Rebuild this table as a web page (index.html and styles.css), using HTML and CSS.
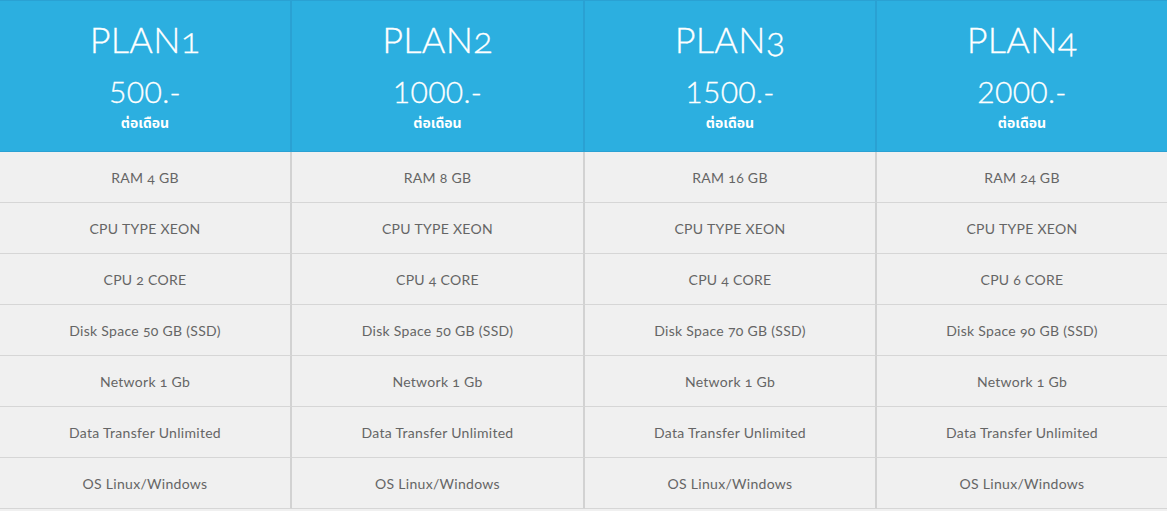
FILE: index.html
```html
<!DOCTYPE html>
<html lang="th">
<head>
<meta charset="utf-8">
<title>Plans</title>
<link rel="stylesheet" href="styles.css">
</head>
<body>
<div class="plans">
  <div class="plan">
    <div class="plan-head">
      <div class="plan-name">PLAN1</div>
      <div class="plan-price">500.-</div>
      <div class="plan-period">ต่อเดือน</div>
    </div>
    <div class="feat">RAM 4 GB</div>
    <div class="feat">CPU TYPE XEON</div>
    <div class="feat">CPU 2 CORE</div>
    <div class="feat">Disk Space 50 GB (SSD)</div>
    <div class="feat">Network 1 Gb</div>
    <div class="feat">Data Transfer Unlimited</div>
    <div class="feat">OS Linux/Windows</div>
  </div>
  <div class="plan">
    <div class="plan-head">
      <div class="plan-name">PLAN2</div>
      <div class="plan-price">1000.-</div>
      <div class="plan-period">ต่อเดือน</div>
    </div>
    <div class="feat">RAM 8 GB</div>
    <div class="feat">CPU TYPE XEON</div>
    <div class="feat">CPU 4 CORE</div>
    <div class="feat">Disk Space 50 GB (SSD)</div>
    <div class="feat">Network 1 Gb</div>
    <div class="feat">Data Transfer Unlimited</div>
    <div class="feat">OS Linux/Windows</div>
  </div>
  <div class="plan">
    <div class="plan-head">
      <div class="plan-name">PLAN3</div>
      <div class="plan-price">1500.-</div>
      <div class="plan-period">ต่อเดือน</div>
    </div>
    <div class="feat">RAM 16 GB</div>
    <div class="feat">CPU TYPE XEON</div>
    <div class="feat">CPU 4 CORE</div>
    <div class="feat">Disk Space 70 GB (SSD)</div>
    <div class="feat">Network 1 Gb</div>
    <div class="feat">Data Transfer Unlimited</div>
    <div class="feat">OS Linux/Windows</div>
  </div>
  <div class="plan">
    <div class="plan-head">
      <div class="plan-name">PLAN4</div>
      <div class="plan-price">2000.-</div>
      <div class="plan-period">ต่อเดือน</div>
    </div>
    <div class="feat">RAM 24 GB</div>
    <div class="feat">CPU TYPE XEON</div>
    <div class="feat">CPU 6 CORE</div>
    <div class="feat">Disk Space 90 GB (SSD)</div>
    <div class="feat">Network 1 Gb</div>
    <div class="feat">Data Transfer Unlimited</div>
    <div class="feat">OS Linux/Windows</div>
  </div>
</div>
</body>
</html>
```
FILE: styles.css
```css
html, body {
  margin: 0;
  padding: 0;
  background: #f0f0f0;
}
body {
  font-family: Lato, "Noto Sans", "Noto Sans Thai", sans-serif;
  font-variant-numeric: oldstyle-nums;
}
.plans {
  display: grid;
  grid-template-columns: 292px 293px 292px 1fr;
}
.plan {
  display: flex;
  flex-direction: column;
}
.plan-head {
  height: 150px;
  background: #2cafe0;
  border-top: 1px solid #2aa1d3;
  border-bottom: 1px solid #2aa1d3;
  border-right: 2px solid #2aa1d3;
  color: #fff;
  text-align: center;
}
.plan:last-child .plan-head {
  border-right: none;
}
.plan-name {
  font-size: 36px;
  font-weight: 300;
  line-height: 36px;
  padding-top: 20px;
  letter-spacing: 0.3px;
  -webkit-text-stroke: 0.3px #fff;
}
.plan-price {
  font-size: 30px;
  font-weight: 300;
  line-height: 30px;
  margin-top: 19px;
  letter-spacing: 0.3px;
  font-variant-numeric: lining-nums;
  -webkit-text-stroke: 0.3px #fff;
}
.plan-period {
  font-family: "Noto Sans", "Noto Sans Thai", sans-serif;
  font-size: 14px;
  font-weight: 700;
  line-height: 20px;
  margin-top: 7px;
}
.feat {
  height: 50px;
  border-bottom: 1px solid #d6d6d6;
  border-right: 2px solid #d2d2d2;
  display: flex;
  align-items: center;
  justify-content: center;
  font-size: 14px;
  letter-spacing: 0.3px;
  color: #656565;
  background: #f0f0f0;
}
.plan:last-child .feat {
  border-right: none;
}
```
